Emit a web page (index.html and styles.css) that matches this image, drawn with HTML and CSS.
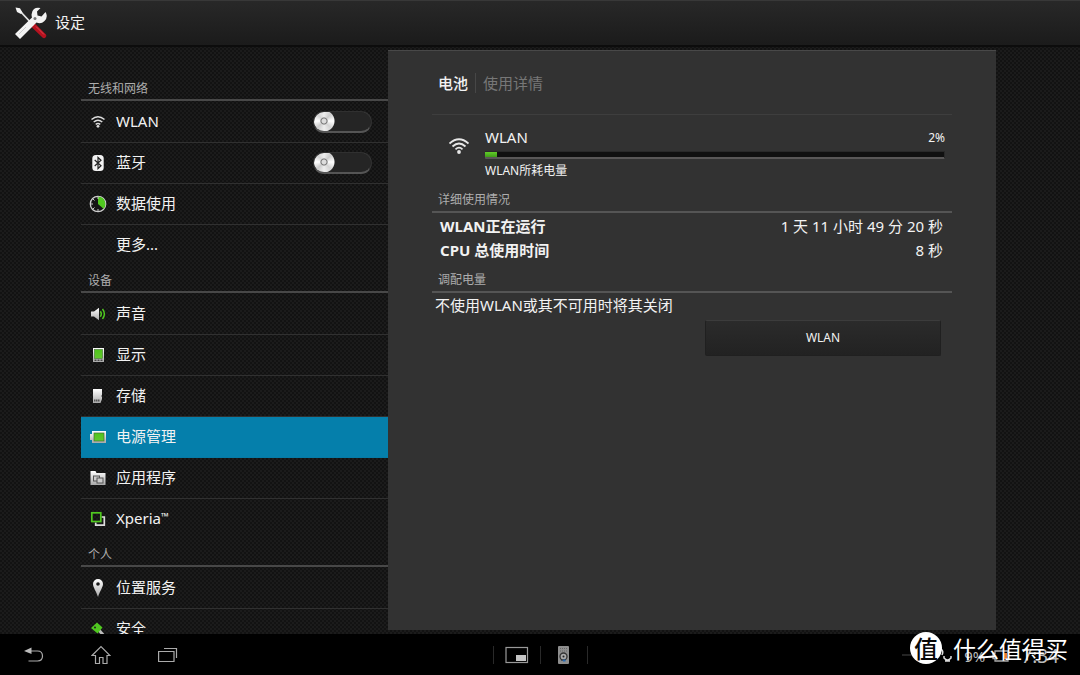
FILE: index.html
```html
<!DOCTYPE html>
<html lang="zh-CN">
<head>
<meta charset="utf-8">
<meta name="viewport" content="width=device-width, initial-scale=1">
<title>设定</title>
<link rel="stylesheet" href="styles.css">
</head>
<body>
<svg class="defs" width="0" height="0" aria-hidden="true">
  <defs>
    <linearGradient id="silver" x1="0" y1="0" x2="0" y2="1"><stop offset="0" stop-color="#fff"/><stop offset="1" stop-color="#a9a9a9"/></linearGradient>
    <linearGradient id="green" x1="0" y1="0" x2="0" y2="1"><stop offset="0" stop-color="#4fc41c"/><stop offset="1" stop-color="#63c92e"/></linearGradient>
  </defs>
</svg>

<header class="topbar">
  <svg class="topbar-icon" viewBox="0 0 32 32" aria-hidden="true">
    <path d="M4 3L19 19" stroke="#e4e4e4" stroke-width="1.8"/>
    <path d="M0.500 0.500L5 1.300L7.500 5.500L6 7L2 5Z" fill="#f4f4f4"/>
    <path d="M20 16.500L31 27.500Q32 29 30.500 30.500Q29 32 27.500 30.500L16.500 20Z" fill="#b5121f"/>
    <path d="M21 19.500L29 27.500" stroke="#e04651" stroke-width="1"/>
    <path d="M0 27L17 10.500Q15.500 5 19 2Q21.500 0 25.500 1L22 4.500L22.500 8.500L26.500 9.500L30.500 5Q33.500 10 29.500 14Q26 17.500 21.500 15.500L5 32Z" fill="#f3f3f3"/>
    <circle cx="20" cy="11.500" r="1.500" fill="#777"/>
    <path d="M4 27L11 20" stroke="#ccc" stroke-width="1"/>
  </svg>
  <h1 class="topbar-title">设定</h1>
</header>

<main class="content">
  <nav class="sidebar" aria-label="设定">
    <h2 class="section-label">无线和网络</h2>
    <ul class="menu">
      <li class="menu-item">
        <svg class="menu-icon" viewBox="0 0 18 18" aria-hidden="true"><g fill="none" stroke="#ddd" stroke-width="1.500"><path d="M2.500 6.500Q9 1 15.500 6.500M4.700 9Q9 5.500 13.300 9M6.700 11.300Q9 9.600 11.300 11.300"/></g><circle cx="9" cy="13.300" r="1.400" fill="#ddd"/></svg>
        <label class="menu-link" for="wlan">WLAN</label>
        <input class="switch" type="checkbox" role="switch" id="wlan">
      </li>
      <li class="menu-item">
        <svg class="menu-icon" viewBox="0 0 18 18" aria-hidden="true"><rect x="3.300" y="1" width="11.400" height="16" rx="3.500" fill="#f2f2f2"/><path d="M5.700 6L12 11.700L9 14.500V3.500L12 6.300L5.700 12" fill="none" stroke="#222" stroke-width="1.200"/></svg>
        <label class="menu-link" for="bluetooth">蓝牙</label>
        <input class="switch" type="checkbox" role="switch" id="bluetooth">
      </li>
      <li class="menu-item">
        <svg class="menu-icon" viewBox="0 0 18 18" aria-hidden="true"><circle cx="9" cy="9" r="7.700" fill="#151515" stroke="#ccc" stroke-width="1.300"/><path d="M9 9V1.800A7.200 7.200 0 0 1 14.500 13.800Z" fill="#50c820"/><path d="M9 16V14M2 9H4M4 4L5.500 5.500M4 14L5.500 12.500M9 2V4" stroke="#ccc"/></svg>
        <a class="menu-link" href="#data">数据使用</a>
      </li>
      <li class="menu-item">
        <span class="menu-icon"></span>
        <a class="menu-link" href="#more">更多...</a>
      </li>
    </ul>
    <h2 class="section-label">设备</h2>
    <ul class="menu">
      <li class="menu-item">
        <svg class="menu-icon" viewBox="0 0 18 18" aria-hidden="true"><path d="M2 6.500H5L10 2.800V15.200L5 11.500H2Z" fill="url(#silver)"/><path d="M11.300 6.300Q13.300 9 11.300 11.700M13.500 4Q17.300 9 13.500 14" fill="none" stroke="#50c820" stroke-width="1.500"/></svg>
        <a class="menu-link" href="#sound">声音</a>
      </li>
      <li class="menu-item">
        <svg class="menu-icon" viewBox="0 0 18 18" aria-hidden="true"><rect x="4" y="2" width="11" height="14" fill="url(#silver)"/><rect x="5.500" y="3.500" width="8" height="9" fill="url(#green)" stroke="#437033" stroke-width=".6"/><path d="M5.500 14.300H13.500" stroke="#444" stroke-width="1.500" stroke-dasharray="2 1"/></svg>
        <a class="menu-link" href="#display">显示</a>
      </li>
      <li class="menu-item">
        <svg class="menu-icon" viewBox="0 0 18 18" aria-hidden="true"><path d="M4 2H13V8L12.300 9L13 10V12L11.500 16H4Z" fill="url(#silver)"/><path d="M5 13.500H11" stroke="#555" stroke-width="2" stroke-dasharray="1.500 .5"/></svg>
        <a class="menu-link" href="#storage">存储</a>
      </li>
      <li class="menu-item is-selected">
        <svg class="menu-icon" viewBox="0 0 18 18" aria-hidden="true"><path d="M3 3H17V15H3V12H1V6H3Z" fill="url(#silver)"/><rect x="5" y="5" width="10" height="8" fill="url(#green)" stroke="#437033" stroke-width=".7"/></svg>
        <a class="menu-link" href="#power" aria-current="page">电源管理</a>
      </li>
      <li class="menu-item">
        <svg class="menu-icon" viewBox="0 0 18 18" aria-hidden="true"><path d="M1.500 2H6.500L7.500 4H16.500V16H1.500Z" fill="url(#silver)"/><g fill="#ccc" stroke="#555"><rect x="4.500" y="7" width="6" height="5"/><rect x="8" y="9" width="6" height="5"/></g></svg>
        <a class="menu-link" href="#apps">应用程序</a>
      </li>
      <li class="menu-item">
        <svg class="menu-icon" viewBox="0 0 18 18" aria-hidden="true"><path d="M12.500 7H15.300V15.200H6.700V12.500" fill="none" stroke="#ddd" stroke-width="1.700"/><rect x="2.800" y="2.800" width="9" height="8.700" fill="none" stroke="#50c820" stroke-width="1.700"/></svg>
        <a class="menu-link" href="#xperia">Xperia<span class="trademark">™</span></a>
      </li>
    </ul>
    <h2 class="section-label">个人</h2>
    <ul class="menu">
      <li class="menu-item">
        <svg class="menu-icon" viewBox="0 0 18 18" aria-hidden="true"><path fill-rule="evenodd" d="M9 0A5 5 0 0 1 14 5C14 8 11 12 9 18C7 12 4 8 4 5A5 5 0 0 1 9 0M9 3.200A1.800 1.800 0 1 0 9 6.800A1.800 1.800 0 1 0 9 3.200" fill="url(#silver)"/></svg>
        <a class="menu-link" href="#location">位置服务</a>
      </li>
      <li class="menu-item">
        <svg class="menu-icon" viewBox="0 0 18 18" aria-hidden="true"><path d="M9 9L15.500 16.500" stroke="#bbb" stroke-width="3"/><path d="M2 8L8 2.500L13.500 7.500L8.500 13.500Z" fill="#50c820"/><circle cx="6" cy="7.500" r="1" fill="#222"/></svg>
        <a class="menu-link" href="#security">安全</a>
      </li>
    </ul>
  </nav>

  <section class="panel">
    <div class="crumbs">
      <a class="crumb" href="#battery">电池</a>
      <span class="crumb crumb-muted">使用详情</span>
    </div>
    <div class="usage">
      <svg class="usage-icon" viewBox="0 0 20 20" aria-hidden="true"><g fill="none" stroke="#e8e8e8" stroke-width="1.800"><path d="M.5 7.500Q10-1 19.500 7.500M3.500 10.500Q10 4.500 16.500 10.500M6.500 13.300Q10 10 13.500 13.300"/></g><circle cx="10" cy="16" r="1.900" fill="#e8e8e8"/></svg>
      <div class="usage-body">
        <div class="usage-head"><span class="usage-name">WLAN</span><span class="usage-percent">2%</span></div>
        <div class="bar" role="progressbar" aria-label="WLAN所耗电量" aria-valuenow="2" aria-valuemin="0" aria-valuemax="100"><div class="bar-fill"></div></div>
        <p class="usage-note">WLAN所耗电量</p>
      </div>
    </div>
    <h2 class="section-label">详细使用情况</h2>
    <dl class="details">
      <div class="detail"><dt>WLAN正在运行</dt><dd>1 天 11 小时 49 分 20 秒</dd></div>
      <div class="detail"><dt>CPU 总使用时间</dt><dd>8 秒</dd></div>
    </dl>
    <h2 class="section-label">调配电量</h2>
    <p class="advice">不使用WLAN或其不可用时将其关闭</p>
    <button class="action" type="button">WLAN</button>
  </section>
</main>

<footer class="sysbar">
  <div class="sys-keys">
    <button class="sys-button" type="button" aria-label="返回"><svg width="20" height="16" viewBox="0 0 20 16"><path d="M6 4H13.500Q18.500 4 18.500 9Q18.500 14 13.500 14H4.500" fill="none" stroke="#aaa" stroke-width="1.200"/><path d="M0 4L7.500 0.500V7Z" fill="#bbb"/></svg></button>
    <button class="sys-button" type="button" aria-label="主屏幕"><svg width="20" height="20" viewBox="0 0 20 20"><path d="M1 10.500L10 1.500L19 10.500H16V18.500H12V12.500H8.500V18.500H4.500V10.500Z" fill="none" stroke="#aaa" stroke-width="1.200"/></svg></button>
    <button class="sys-button" type="button" aria-label="最近任务"><svg width="20" height="16" viewBox="0 0 20 16"><path d="M.6 4.500H16V14.500H.6ZM6 1.500H18.500V11" fill="none" stroke="#aaa" stroke-width="1.200"/></svg></button>
  </div>
  <div class="sys-apps">
    <button class="sys-app" type="button" aria-label="小应用"><svg width="24" height="18" viewBox="0 0 24 18"><rect x="1" y="1.500" width="21.500" height="15" fill="none" stroke="#999" stroke-width="1.200"/><rect x="11" y="9" width="10" height="6" fill="#c4c4c4"/></svg></button>
    <button class="sys-app" type="button" aria-label="遥控器"><svg width="12" height="20" viewBox="0 0 12 20"><rect x="0" y="1" width="11" height="18" rx="1" fill="#8e8e8e"/><path d="M2 3.500H9M2 6H9" stroke="#666" stroke-dasharray="1 1"/><circle cx="5.500" cy="11.500" r="3.500" fill="#aaa" stroke="#333" stroke-width="1.300"/><circle cx="5.500" cy="11.500" r="1" fill="#222"/><path d="M3 15.500H5" stroke="#456"/><path d="M5 15.500H7.500" stroke="#2668b0" stroke-width="2"/></svg></button>
  </div>
  <div class="sys-status">
    <svg width="52" height="18" viewBox="0 0 52 18" aria-hidden="true"><path d="M0 8H12" stroke="#242424" stroke-width="2"/><path d="M39 2Q42 4 40 8M42 9V11Q45.500 15 49 11V9M43 14H48" fill="none" stroke="#ddd" stroke-width="1.500"/></svg>
    <span class="sys-percent">9%</span>
    <svg width="17" height="14" viewBox="0 0 17 14" aria-hidden="true"><path d="M3 2H16V12H3V9.500H1V4.500H3Z" fill="none" stroke="#aaa" stroke-width="1.300"/><rect x="12" y="4" width="3" height="6" fill="#e87932"/></svg>
    <time class="sys-time">7:34</time>
  </div>
</footer>

<div class="watermark">
  <span class="watermark-badge">值</span>
  <span class="watermark-text">什么值得买</span>
</div>
</body>
</html>
```

FILE: styles.css
```css
* { box-sizing: border-box; }

body {
  display: flex;
  flex-direction: column;
  height: 100vh;
  margin: 0;
  overflow: hidden;
  background-color: #121212;
  background-image:
    linear-gradient(45deg, #1b1b1b 25%, transparent 25%, transparent 75%, #1b1b1b 75%),
    linear-gradient(45deg, #1b1b1b 25%, transparent 25%, transparent 75%, #1b1b1b 75%);
  background-position: 0 0, 2px 2px;
  background-size: 4px 4px;
  color: #f2f2f2;
  font-family: "Noto Sans", "Noto Sans CJK SC", sans-serif;
  font-size: 15px;
  line-height: 24px;
}

h1, h2, p, ul, dl, dd { margin: 0; padding: 0; }
h1, h2 { font-weight: 400; }
ul { list-style: none; }
a { color: inherit; text-decoration: none; }
button { font: inherit; color: inherit; cursor: pointer; }
.defs { position: absolute; }

.topbar {
  display: flex;
  flex: none;
  align-items: center;
  gap: 8px;
  height: 47px;
  padding: 0 15px;
  border-top: 1px solid #383838;
  border-bottom: 2px solid #0c0c0c;
  background: linear-gradient(#282828, #1b1b1b);
}
.topbar-icon { width: 32px; height: 32px; }
.topbar-title { padding-bottom: 2px; font-size: 15px; }

.content {
  display: grid;
  flex: 1;
  grid-template-columns: 307px 1fr;
  min-height: 0;
  padding: 0 84px 0 81px;
  overflow: hidden;
}

.sidebar { padding-top: 27px; min-height: 0; }

.section-label {
  height: 28px;
  padding: 3px 7px 0;
  border-bottom: 2px solid #484848;
  color: #adadad;
  font-size: 12px;
}
.sidebar .section-label { height: 27px; margin-bottom: 1px; }

.menu-item {
  display: flex;
  align-items: center;
  height: 41px;
  padding: 0 16px 0 8px;
  border-bottom: 1px solid #303030;
}
.menu-item:last-child { border-bottom-color: transparent; }
.menu-item.is-selected { border-bottom-color: #067ba6; background: #057fab; }
.menu-icon { flex: none; width: 18px; height: 18px; margin-right: 9px; }
.menu-link { flex: 1; padding-bottom: 2px; }
.trademark { font-size: 10px; vertical-align: 4px; line-height: 1; }

.switch {
  width: 59px;
  height: 22px;
  margin: 0;
  border: 1px solid #303030;
  border-bottom: 2px solid #555;
  border-radius: 11px;
  appearance: none;
  background:
    radial-gradient(circle at 11px 10px, #ddd 0 2px, #777 3px, #ddd 4px, transparent 4px),
    radial-gradient(circle at 11px 10px, transparent 0 10px, #252525 11px),
    conic-gradient(from 0deg at 11px 10px, #eee, #ccc, #fff, #d4d4d4, #eee, #ccc, #fff, #d4d4d4, #eee);
  background-origin: border-box;
  cursor: pointer;
}

.panel {
  display: flex;
  flex-direction: column;
  margin: 3px 0 4px;
  padding: 0 44px;
  border-top: 1px solid #484848;
  background: #323232;
}

.crumbs {
  display: flex;
  align-items: center;
  height: 64px;
  padding: 1px 6px 0;
  border-bottom: 1px solid #3e3e3e;
}
.crumb { font-weight: 500; line-height: 20px; }
.crumb-muted {
  margin-left: 7px;
  padding-left: 7px;
  border-left: 1px solid #474747;
  color: #777;
  font-weight: 400;
}

.usage { display: flex; gap: 16px; padding: 10px 7px 3px 17px; }
.usage-icon { flex: none; width: 20px; height: 20px; margin-top: 11px; }
.usage-body { flex: 1; }
.usage-head { display: flex; align-items: flex-end; justify-content: space-between; }
.usage-name { padding-bottom: 1px; }
.usage-percent { font-size: 12px; }
.bar {
  height: 8px;
  margin-top: 1px;
  border: solid #292929;
  border-width: 1px 1px 2px 0;
  border-bottom-color: #595757;
  border-radius: 1px;
  background: #101010;
}
.bar-fill { width: 12px; height: 5px; background: linear-gradient(#62cc29, #3f9c18); }
.usage-note { font-size: 12px; }

.panel > .section-label { height: 27px; padding: 2px 6px 0; border-color: #555; }
.details { padding: 1px 9px 4px 8px; }
.detail { display: flex; justify-content: space-between; }
.detail dt { font-weight: 700; }
.advice { padding: 0 3px; }

.action {
  width: 236px;
  height: 36px;
  margin: 3px 11px 0 auto;
  border: 1px solid #202020;
  border-top-color: #3c3c3c;
  border-radius: 2px;
  background: linear-gradient(#2b2b2b, #222);
  font-size: 12px;
}

.sysbar {
  display: grid;
  flex: none;
  grid-template-columns: 1fr auto 1fr;
  align-items: center;
  height: 41px;
  padding-top: 1px;
  background: #000;
}
.sys-keys { display: flex; padding-left: 24px; gap: 47px; }
.sys-button, .sys-app {
  display: flex;
  align-items: center;
  justify-content: center;
  padding: 0;
  border: 0;
  background: none;
}
.sys-apps { display: flex; border-left: 1px solid #292929; }
.sys-app { width: 47px; height: 18px; border-right: 1px solid #292929; }
.sys-status { display: flex; align-items: center; justify-content: flex-end; padding: 2px 21px 0 0; color: #bbb; }
.sys-percent { margin: 0 7px 0 10px; }
.sys-time { margin-left: 12px; font-size: 19px; }

.watermark {
  position: absolute;
  right: 12px;
  bottom: 11px;
  display: flex;
  align-items: center;
  gap: 11px;
  color: #fff;
  font-family: "Noto Sans CJK SC", sans-serif;
  pointer-events: none;
}
.watermark-badge {
  width: 32px;
  height: 32px;
  border-radius: 50%;
  background: #fff;
  color: #080808;
  font-size: 24px;
  font-weight: 500;
  line-height: 32px;
  text-align: center;
}
.watermark-text { font-size: 23px; line-height: 32px; }
```
